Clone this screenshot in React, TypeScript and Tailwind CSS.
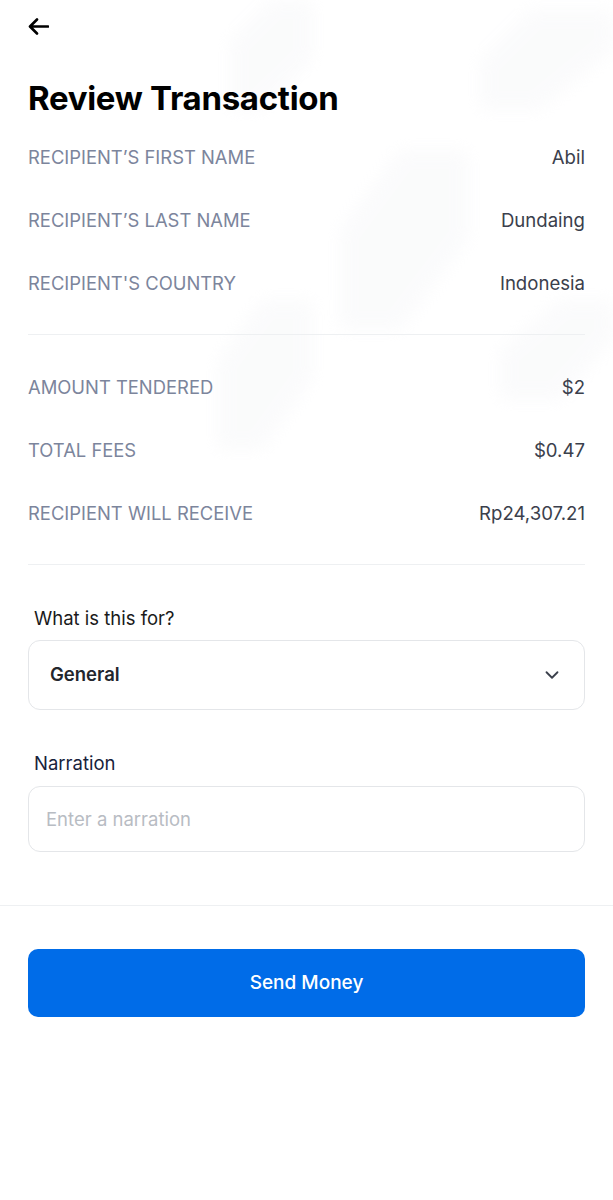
import { FiChevronDown } from "react-icons/fi";

const recipientRows = [
  { label: "RECIPIENT’S FIRST NAME", value: "Abil" },
  { label: "RECIPIENT’S LAST NAME", value: "Dundaing" },
  { label: "RECIPIENT'S COUNTRY", value: "Indonesia" },
];

const amountRows = [
  { label: "AMOUNT TENDERED", value: "$2" },
  { label: "TOTAL FEES", value: "$0.47" },
  { label: "RECIPIENT WILL RECEIVE", value: "Rp24,307.21" },
];

function DetailRow({ label, value }: { label: string; value: string }) {
  return (
    <div className="h-[63px] flex items-center justify-between">
      <span className="text-[18.4px] text-[#7c859c]">{label}</span>
      <span className="text-[18.6px] text-[#3b404c]">{value}</span>
    </div>
  );
}

// faint watermark shapes behind the content
function Watermark() {
  return (
    <svg
      className="absolute inset-0 w-full h-[460px] pointer-events-none"
      viewBox="0 0 613 460"
      preserveAspectRatio="none"
    >
      <defs>
        <filter id="soft">
          <feGaussianBlur stdDeviation="8" />
        </filter>
      </defs>
      <g fill="#f1f2f5" opacity="0.3" filter="url(#soft)">
        <polygon points="230,110 230,40 270,0 312,0 312,60 260,110" />
        <polygon points="340,330 340,230 400,150 468,150 468,240 400,330" />
        <polygon points="218,450 218,360 262,300 312,300 312,380 262,450" />
        <polygon points="500,400 500,350 560,300 613,300 613,340 560,400" />
        <polygon points="480,110 480,60 530,10 613,10 613,50 540,110" />
      </g>
    </svg>
  );
}

export default function App() {
  return (
    <div
      className="relative min-h-[1200px] w-full bg-white overflow-hidden"
      style={{ fontFamily: "Inter, 'Noto Sans', sans-serif" }}
    >
      <Watermark />

      <div className="relative">
        {/* header */}
        <div className="px-7 pt-[18px]">
          <button className="block">
            <svg width="21" height="17" viewBox="0 0 21 17" fill="none">
              <path
                d="M20 8.5H2.5M9 1.5L2 8.5L9 15.5"
                stroke="#000"
                strokeWidth="2.6"
                strokeLinecap="round"
                strokeLinejoin="round"
              />
            </svg>
          </button>
          <h1 className="mt-[43px] text-[33px] leading-[40px] font-bold text-black tracking-[-0.3px]">
            Review Transaction
          </h1>
        </div>

        {/* details */}
        <div className="px-7 mt-[8px]">
          {recipientRows.map((row) => (
            <DetailRow key={row.label} {...row} />
          ))}
          <div className="mt-[19px] mb-[21px] h-px bg-[#eef0f2]" />
          {amountRows.map((row) => (
            <DetailRow key={row.label} {...row} />
          ))}
          <div className="mt-[19px] h-px bg-[#eef0f2]" />
        </div>

        {/* form */}
        <div className="px-7 mt-[41px]">
          <label className="block pl-[6px] text-[18.5px] leading-[24px] text-[#1a1a1a]">
            What is this for?
          </label>
          <div className="mt-[10px] h-[70px] px-[21px] flex items-center justify-between rounded-[12px] border border-[#e4e6e9] bg-white">
            <span className="text-[18.5px] font-semibold text-[#23262d]">General</span>
            <FiChevronDown className="text-[#3b404c]" size={22} />
          </div>

          <label className="block mt-[41px] pl-[6px] text-[18.5px] leading-[24px] text-[#17223b]">
            Narration
          </label>
          <input
            className="mt-[11px] w-full h-[66px] px-[17px] rounded-[12px] border border-[#e4e6e9] bg-white text-[18.5px] text-[#1c1f26] placeholder:text-[#b8bcc3] outline-none"
            placeholder="Enter a narration"
          />
        </div>

        <div className="mt-[53px] h-px bg-[#eef0f2]" />

        <div className="px-7 pt-[43px]">
          <button className="w-full h-[68px] rounded-[10px] bg-[#006ce8] text-white text-[19px] font-medium">
            Send Money
          </button>
        </div>
      </div>
    </div>
  );
}
